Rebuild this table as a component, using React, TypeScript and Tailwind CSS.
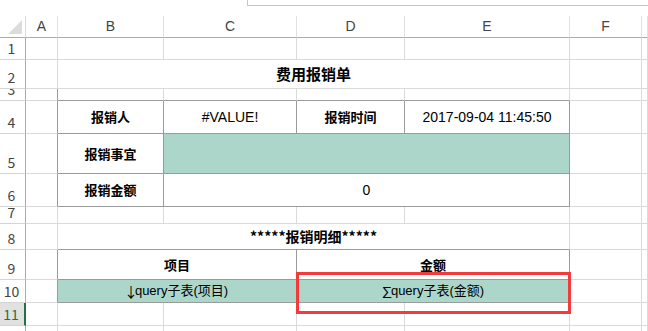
import React from 'react';

const DARK = 'dark';

type CellProps = {
  span?: 1 | 2 | 3 | 4;
  r?: string;
  b?: string;
  fill?: boolean;
  className?: string;
  children?: React.ReactNode;
};

const spans = { 1: 'col-span-1', 2: 'col-span-2', 3: 'col-span-3', 4: 'col-span-4' };

// one sheet cell; borders go dark where the bordered table runs
const Cell: React.FC<CellProps> = ({ span = 1, r, b, fill, className = '', children }) => (
  <div
    className={`${spans[span]} flex items-center justify-center overflow-hidden whitespace-nowrap border-r border-b ${
      r === DARK ? 'border-r-[#9b9b9b]' : 'border-r-[#dadada]'
    } ${b === DARK ? 'border-b-[#9b9b9b]' : 'border-b-[#dadada]'} ${fill ? 'bg-[#acd6c9]' : 'bg-white'} ${className}`}
  >
    {children}
  </div>
);

const RowHead: React.FC<{ n: number; selected?: boolean }> = ({ n, selected }) => (
  <div
    className={`flex items-end justify-center overflow-hidden pb-[1px] pr-[2px] text-[14px] leading-[20px] border-b border-b-[#d4d4d4] ${
      selected
        ? 'bg-[#e1e1e1] text-[#217346] border-r-2 border-r-[#217346]'
        : 'bg-white text-[#444] border-r border-r-[#ababab]'
    }`}
  >
    {n}
  </div>
);

const label = 'font-bold text-[13px] text-black';
const latin = "text-[14px] text-black font-['Liberation_Sans','Noto_Sans_CJK_SC',sans-serif]";
const mixed = "text-[13px] text-black font-['Liberation_Sans','Noto_Sans_CJK_SC',sans-serif]";
const sym = "font-['Noto_Sans_CJK_SC',sans-serif] text-[14px] -ml-[2px] -mr-[3px]";

const Blank: React.FC<{ n?: number }> = ({ n = 1 }) => (
  <>
    {Array.from({ length: n }).map((_, i) => (
      <Cell key={i} />
    ))}
  </>
);

export default function App() {
  const letters = ['A', 'B', 'C', 'D', 'E', 'F', ''];

  return (
    <div className="relative h-[331px] w-[648px] overflow-hidden bg-white font-['Noto_Sans_CJK_SC',sans-serif]">
      {/* formula bar edge */}
      <div className="h-[16px]">
        <div className="ml-[247px] h-[6px] border-l border-b border-[#c6c6c6]" />
      </div>

      <div className="grid grid-cols-[26px_32px_106px_133px_108px_165px_72px_1fr] grid-rows-[22px_22px_29px_12px_33px_40px_33px_17px_26px_30px_23px_23px_23px]">
        {/* column headers */}
        <div className="relative border-r border-b border-r-[#dadada] border-b-[#ababab]">
          <svg className="absolute left-0 top-0" width="25" height="21">
            <polygon points="22,4 22,18 8,18" fill="#dcdcdc" />
          </svg>
        </div>
        {letters.map((l, i) => (
          <div
            key={i}
            className="flex items-center justify-center border-r border-b border-r-[#e1e1e1] border-b-[#ababab] text-[14px] text-[#444] font-['Liberation_Sans',sans-serif]"
          >
            {l}
          </div>
        ))}

        {/* 1 */}
        <RowHead n={1} />
        <Blank n={7} />

        {/* 2 */}
        <RowHead n={2} />
        <Cell />
        <Cell span={4} className="font-bold text-[15px] text-black">
          费用报销单
        </Cell>
        <Blank n={2} />

        {/* 3 */}
        <RowHead n={3} />
        <Cell r={DARK} />
        <Cell b={DARK} />
        <Cell b={DARK} />
        <Cell b={DARK} />
        <Cell b={DARK} />
        <Blank n={2} />

        {/* 4 */}
        <RowHead n={4} />
        <Cell r={DARK} />
        <Cell r={DARK} b={DARK} className={label}>报销人</Cell>
        <Cell r={DARK} b={DARK} className={latin}>#VALUE!</Cell>
        <Cell r={DARK} b={DARK} className={label}>报销时间</Cell>
        <Cell r={DARK} b={DARK} className={latin}>2017-09-04 11:45:50</Cell>
        <Blank n={2} />

        {/* 5 */}
        <RowHead n={5} />
        <Cell r={DARK} />
        <Cell r={DARK} b={DARK} className={label}>报销事宜</Cell>
        <Cell span={3} r={DARK} b={DARK} fill />
        <Blank n={2} />

        {/* 6 */}
        <RowHead n={6} />
        <Cell r={DARK} />
        <Cell r={DARK} b={DARK} className={label}>报销金额</Cell>
        <Cell span={3} r={DARK} b={DARK} className={latin}>0</Cell>
        <Blank n={2} />

        {/* 7 */}
        <RowHead n={7} />
        <Blank n={7} />

        {/* 8 */}
        <RowHead n={8} />
        <Cell />
        <Cell span={4} b={DARK} className="font-bold text-[14px] text-black">
          *****报销明细*****
        </Cell>
        <Blank n={2} />

        {/* 9 */}
        <RowHead n={9} />
        <Cell r={DARK} />
        <Cell span={2} r={DARK} b={DARK} className={label}>项目</Cell>
        <Cell span={2} r={DARK} b={DARK} className={label}>金额</Cell>
        <Blank n={2} />

        {/* 10 */}
        <RowHead n={10} />
        <Cell r={DARK} />
        <Cell span={2} r={DARK} b={DARK} fill className={mixed}>
          <span className={sym}>↓</span>query子表(项目)
        </Cell>
        <Cell span={2} r={DARK} b={DARK} fill className={mixed}>
          <span className={sym}>∑</span>query子表(金额)
        </Cell>
        <Blank n={2} />

        {/* 11 */}
        <RowHead n={11} selected />
        <Blank n={7} />

        {/* 12 */}
        <RowHead n={12} />
        <Blank n={7} />
      </div>

      {/* highlight box around the amount column formula */}
      <div className="pointer-events-none absolute left-[296px] top-[272px] h-[42px] w-[275px] border-[3px] border-[#f23b3b]" />
    </div>
  );
}
